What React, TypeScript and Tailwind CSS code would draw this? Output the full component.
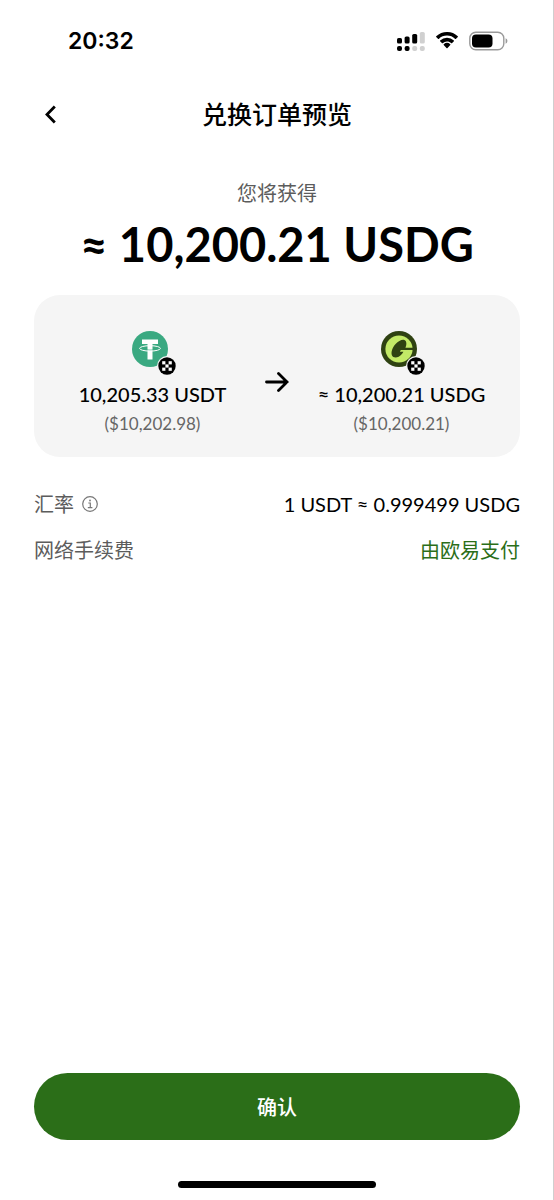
import type { ReactNode } from "react";

function StatusBar() {
  return (
    <div className="flex h-[82px] items-center justify-between pl-[68px] pr-[45px]">
      <span className="font-['Inter','Liberation_Sans',sans-serif] text-[23px] font-semibold">20:32</span>
      <div className="flex items-center gap-[10px]">
        <svg width="28" height="20" viewBox="0 0 28 20" aria-hidden="true">
          <rect x="0" y="7" width="5" height="5.5" rx="1.6" />
          <rect x="7.6" y="5.5" width="5" height="7" rx="1.6" />
          <rect x="15.2" y="3" width="5" height="9.5" rx="1.6" />
          <rect x="22.8" y="1" width="5" height="11.5" rx="1.6" fill="#d0d0d0" />
          <rect x="0" y="15" width="5" height="5" rx="2" />
          <rect x="7.6" y="15" width="5" height="5" rx="2" />
          <rect x="15.2" y="15" width="5" height="5" rx="2" fill="#d0d0d0" />
          <rect x="22.8" y="15" width="5" height="5" rx="2" fill="#d0d0d0" />
        </svg>
        <svg width="24" height="18" viewBox="0 0 24 18" aria-hidden="true">
          <path d="M12 3.6c3.1 0 6 1.2 8.2 3.3.2.2.5.2.6 0l2-2c.2-.2.2-.5 0-.7A15.6 15.6 0 0 0 12 0C8 0 4.2 1.5 1.2 4.2c-.2.2-.2.5 0 .7l2 2c.1.2.4.2.6 0A11.9 11.9 0 0 1 12 3.6z" />
          <path d="M12 9.6c1.6 0 3.1.6 4.3 1.6.2.2.5.2.6 0l2-2c.2-.2.2-.5 0-.7a10.2 10.2 0 0 0-13.8 0c-.2.2-.2.5 0 .7l2 2c.1.2.4.2.6 0A6.6 6.6 0 0 1 12 9.6z" />
          <path d="M15.3 13c.2-.2.2-.5 0-.7a5 5 0 0 0-6.6 0c-.2.2-.2.5 0 .7l3 3.2c.2.2.4.2.6 0z" />
        </svg>
        <svg width="39" height="20" viewBox="0 0 39 20" aria-hidden="true">
          <rect x="0.8" y="1.3" width="34" height="17.4" rx="6" fill="none" stroke="#9a9a9a" strokeWidth="1.4" />
          <rect x="3" y="3.5" width="20.5" height="13" rx="4" />
          <path d="M36.6 7.3v5.4c1.1-.4 1.8-1.5 1.8-2.7s-.7-2.3-1.8-2.7z" fill="#9a9a9a" />
        </svg>
      </div>
    </div>
  );
}

function ChainBadge() {
  return (
    <svg className="absolute left-[25px] top-[25px]" width="20" height="20" viewBox="0 0 20 20" aria-hidden="true">
      <circle cx="10" cy="10" r="10" fill="#f5f5f5" />
      <circle cx="10" cy="10" r="8.7" />
      <g fill="#fff">
        <rect x="5.2" y="5.2" width="3.2" height="3.2" />
        <rect x="11.6" y="5.2" width="3.2" height="3.2" />
        <rect x="8.4" y="8.4" width="3.2" height="3.2" />
        <rect x="5.2" y="11.6" width="3.2" height="3.2" />
        <rect x="11.6" y="11.6" width="3.2" height="3.2" />
      </g>
    </svg>
  );
}

function UsdtIcon() {
  return (
    <svg width="36" height="36" viewBox="0 0 36 36" aria-hidden="true">
      <circle cx="18" cy="18" r="18" fill="#3aa981" />
      <path d="M10 8.5h16V13h-5.5v15.5h-5V13H10z" fill="#fff" />
      <path d="M15 18.9q3 .3 6 0" fill="none" stroke="#3aa981" strokeWidth="0.7" />
      <ellipse cx="18" cy="17.4" rx="10.4" ry="2.7" fill="none" stroke="#fff" strokeWidth="1" />
    </svg>
  );
}

function UsdgIcon() {
  return (
    <svg width="36" height="36" viewBox="0 0 36 36" aria-hidden="true">
      <circle cx="18" cy="18" r="18" fill="#2f4212" />
      <circle cx="18" cy="18" r="13.6" fill="#c3ea67" />
      <path
        d="M23.4 9c2.2.9 2.6 4.300 1 7.800H33v2.200H19.800l-.9 1.800h3.500c-1 2.100-2.700 3.900-4.700 4.900-2.900 1.500-5.900.9-6.800-1.400-1.100-2.900.5-7.700 3.700-11.200C17.500 10 21 8.100 23.400 9z"
        fill="#2f4212"
      />
    </svg>
  );
}

function TokenAmount({ icon, amount, value }: { icon: ReactNode; amount: string; value: string }) {
  return (
    <div className="flex flex-1 flex-col items-center whitespace-nowrap">
      <div className="relative h-9 w-[42px]">
        {icon}
        <ChainBadge />
      </div>
      <p className="mt-3 text-xl leading-[30px] font-medium">{amount}</p>
      <p className="text-[17px] leading-[30px] text-[#666]">{value}</p>
    </div>
  );
}

export default function App() {
  return (
    <div className="flex min-h-screen flex-col border-r border-[#cfcfcf] bg-white font-['Lato','Noto_Sans_CJK_SC',sans-serif] text-black">
      <StatusBar />

      <header className="grid h-[66px] grid-cols-[32px_1fr_32px] items-center pl-[34px] pr-[33px]">
        <button type="button" aria-label="返回" className="flex h-8 items-center justify-center">
          <svg width="12" height="20" viewBox="0 0 12 20" fill="none" stroke="currentColor" strokeWidth="2.8" aria-hidden="true">
            <path d="M10.8 1.5 3 9.500l7.800 8" />
          </svg>
        </button>
        <h1 className="text-center text-[25px] font-medium">兑换订单预览</h1>
      </header>

      <main className="flex flex-1 flex-col pl-[34px] pr-[33px]">
        <p className="mt-[30px] text-center text-xl leading-[30px] text-[#5c5c5c]">您将获得</p>
        <p className="mt-2 text-center text-[47px] leading-[56px] font-bold whitespace-nowrap">≈ 10,200.21 USDG</p>

        <section className="mt-[23px] flex items-center rounded-[26px] bg-[#f5f5f5] px-2 pt-9 pb-[18px]">
          <TokenAmount icon={<UsdtIcon />} amount="10,205.33 USDT" value="($10,202.98)" />
          <svg
            className="mx-[2px] mb-1.5"
            width="24"
            height="20"
            viewBox="0 0 24 20"
            fill="none"
            stroke="currentColor"
            strokeWidth="2.8"
            strokeLinecap="round"
            aria-hidden="true"
          >
            <path d="M1.5 10H22M13.500 1.500 22 10l-8.500 8.500" />
          </svg>
          <TokenAmount icon={<UsdgIcon />} amount="≈ 10,200.21 USDG" value="($10,200.21)" />
        </section>

        <dl className="mt-8 flex flex-col gap-4 text-xl leading-[30px]">
          <div className="flex items-center justify-between">
            <dt className="flex items-center gap-2 text-[#5c5c5c]">
              汇率
              <button type="button" aria-label="汇率说明">
                <svg width="16" height="16" viewBox="0 0 16 16" fill="none" stroke="#777" strokeWidth="1.2" aria-hidden="true">
                  <circle cx="8" cy="8" r="7.3" />
                  <path d="M6.3 7h2v4.500M5.800 11.600h4.600" />
                  <circle cx="8" cy="4.5" r="0.9" fill="#777" stroke="none" />
                </svg>
              </button>
            </dt>
            <dd>1 USDT ≈ 0.999499 USDG</dd>
          </div>
          <div className="flex items-center justify-between">
            <dt className="text-[#5c5c5c]">网络手续费</dt>
            <dd className="text-[#2b6e18]">由欧易支付</dd>
          </div>
        </dl>

        <button type="button" className="mt-auto h-[67px] rounded-full bg-[#2b6e18] text-xl font-medium text-white">
          确认
        </button>
      </main>

      <div className="mx-auto mt-[41px] mb-3 h-[7px] w-[198px] rounded-full bg-black" />
    </div>
  );
}
